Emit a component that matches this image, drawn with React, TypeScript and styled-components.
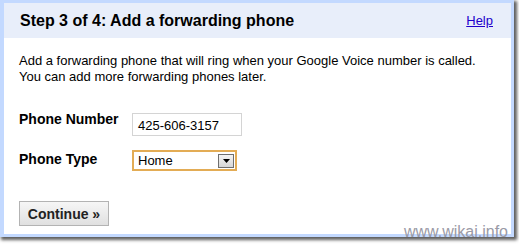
import React from 'react';
import styled, { createGlobalStyle } from 'styled-components';

const GlobalStyle = createGlobalStyle`
  html, body {
    margin: 0;
    padding: 0;
    background: #fff;
  }
  body {
    font-family: Arial, "Liberation Sans", sans-serif;
  }
`;

const Page = styled.div`
  position: relative;
  width: 519px;
  height: 244px;
  overflow: hidden;
  background: #fff;
`;

const Frame = styled.div`
  width: 507px;
  height: 231px;
  border-style: solid;
  border-color: #c3d9ff;
  border-width: 3px 3px 3px 4px;
  background: #fff;
  box-shadow: 2px 2px 3px 1px rgba(40, 40, 40, 0.75);
`;

const Header = styled.div`
  display: flex;
  align-items: center;
  justify-content: space-between;
  height: 35px;
  padding: 0 18px 0 16px;
  background: #e8eefa;
`;

const Title = styled.h2`
  margin: 0;
  color: #000;
  font-size: 16px;
  font-weight: 700;
`;

const HelpLink = styled.a`
  color: #2200cc;
  font-size: 13px;
  text-decoration: underline;
  cursor: pointer;
`;

const Body = styled.div`
  padding: 15px 15px 0;
`;

const Intro = styled.p`
  margin: 0 0 26px;
  color: #000;
  font-size: 13px;
  line-height: 16px;
`;

const Form = styled.div`
  display: grid;
  grid-template-columns: 113px auto;
  row-gap: 14px;
  align-items: start;
`;

const Label = styled.label<{ $offset?: number }>`
  padding-top: ${({ $offset }) => $offset ?? 0}px;
  color: #000;
  font-size: 14px;
  font-weight: 700;
`;

const TextBox = styled.div`
  box-sizing: border-box;
  width: 110px;
  height: 23px;
  margin-top: 2px;
  padding: 4px 5px;
  border: 1px solid #d4d4d4;
  font-size: 13px;
  color: #000;
`;

const Select = styled.div`
  box-sizing: border-box;
  display: flex;
  align-items: center;
  justify-content: space-between;
  width: 105px;
  height: 21px;
  padding: 0 1px 0 4px;
  border: 2px solid #e3ac55;
  font-size: 13px;
  color: #000;
`;

const SelectArrow = styled.span`
  box-sizing: border-box;
  display: flex;
  align-items: center;
  justify-content: center;
  width: 16px;
  height: 14px;
  border: 1px solid #6f6f6f;
  background: linear-gradient(#f4f4f4, #d6d6d6);
`;

const Button = styled.button`
  box-sizing: border-box;
  margin-top: 30px;
  width: 90px;
  height: 25px;
  padding: 0;
  border: 1px solid #b3b3b3;
  background: linear-gradient(#f6f6f6, #e0e0e0);
  color: #222;
  font-family: Arial, "Liberation Sans", sans-serif;
  font-size: 14px;
  font-weight: 700;
`;

const Watermark = styled.span`
  position: absolute;
  right: 11px;
  bottom: 4px;
  color: #9a9aa6;
  font-size: 16px;
  line-height: 16px;
`;

export default function App() {
  return (
    <Page>
      <GlobalStyle />
      <Frame>
        <Header>
          <Title>Step 3 of 4: Add a forwarding phone</Title>
          <HelpLink>Help</HelpLink>
        </Header>
        <Body>
          <Intro>
            Add a forwarding phone that will ring when your Google Voice number is called.
            <br />
            You can add more forwarding phones later.
          </Intro>
          <Form>
            <Label>Phone Number</Label>
            <TextBox>425-606-3157</TextBox>
            <Label $offset={1}>Phone Type</Label>
            <Select>
              Home
              <SelectArrow>
                <svg width="7" height="4" viewBox="0 0 7 4">
                  <path d="M0 0h7L3.5 4z" fill="#000" />
                </svg>
              </SelectArrow>
            </Select>
          </Form>
          <Button>Continue »</Button>
        </Body>
      </Frame>
      <Watermark>www.wikai.info</Watermark>
    </Page>
  );
}
